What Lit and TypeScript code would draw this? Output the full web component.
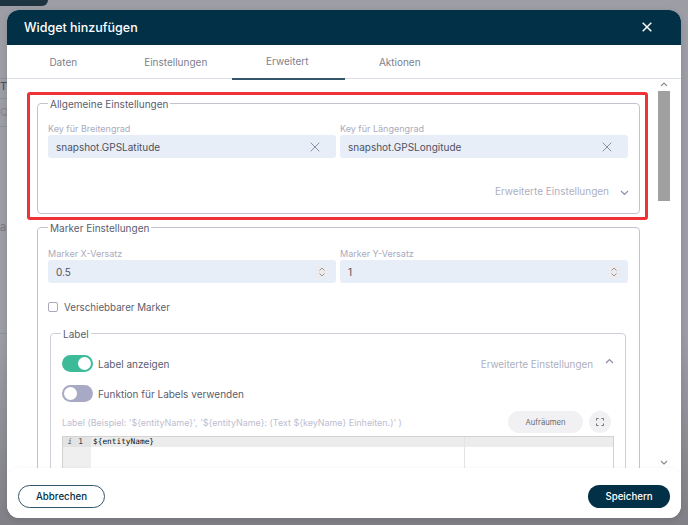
import { LitElement, html, css, svg } from "lit";
import { customElement } from "lit/decorators.js";

const x = svg`<svg width="10" height="10" viewBox="0 0 10 10"><path d="M.7.7l8.600 8.600M9.300.7L.7 9.300" stroke="#8b8fa3" stroke-width="1" fill="none"/></svg>`;
const spin = svg`<svg width="12" height="12" viewBox="0 0 12 12"><rect width="12" height="12" fill="#ececee"/><path d="M3.500 4.500L6 2l2.500 2.500M3.500 7.500L6 10l2.500-2.500" stroke="#8b8b95" stroke-width=".9" fill="none"/></svg>`;

@customElement("app-root")
export class AppRoot extends LitElement {
  static styles = css`
    :host { display: block; width: 688px; height: 525px; overflow: hidden; position: relative; background: #9c9da5; font-family: Inter, sans-serif; }
    .bg-tab { position: absolute; left: 0; top: 0; width: 48px; height: 6px; background: #1f3441; border-bottom-right-radius: 8px; }
    .bg-line { position: absolute; left: 0; width: 7px; height: 1px; background: #8f9199; }
    .bg-t { position: absolute; left: 0; color: #4a4c56; font-size: 11px; line-height: 14px; }
    .shade { position: absolute; left: 0; right: 0; bottom: 0; height: 190px; background: linear-gradient(#9c9da500, #808086); }
    .dialog { position: absolute; left: 7px; top: 10px; width: 674px; height: 508px; background: #fff; border-radius: 12px; display: flex; flex-direction: column; overflow: hidden; box-shadow: 0 2px 6px rgba(0,0,0,0.12); }
    .head { height: 35px; flex: none; background: #023047; color: #fff; display: flex; align-items: center; justify-content: space-between; padding: 0 29px 0 17px; font-size: 12.5px; font-weight: 500; }
    .head svg { display: block; margin-top: -1px; }
    .tabs { height: 34px; flex: none; display: flex; border-bottom: 1.5px solid #dcdce6; box-sizing: border-box; }
    .tab { width: 112.5px; display: flex; align-items: center; justify-content: center; font-size: 10px; color: #7d7f8c; box-sizing: border-box; margin-bottom: -1.5px; }
    .tab.on { border-bottom: 2px solid #33566a; padding-right: 2px; }
    .tab:last-child { padding-right: 2px; }
    .body { flex: 1; min-height: 0; overflow: hidden; display: flex; }
    .main { flex: 1; min-width: 0; padding: 24px 12px 0 30px; }
    .bar { width: 29px; flex: none; box-sizing: border-box; padding-right: 5px; display: flex; flex-direction: column; align-items: center; position: relative; }
    .thumb { width: 12px; height: 110px; background: #a0a0a0; margin-top: 4px; }
    .bar svg { display: block; }
    .up { margin-top: 3px; height: 5px; flex: none; }
    .down { position: absolute; bottom: 53px; left: 8px; }
    .group { position: relative; border: 1px solid #c3c3d0; border-radius: 4px; box-sizing: border-box; }
    .legend { position: absolute; top: -7px; left: 10px; background: #fff; padding: 0 2px; font-size: 10px; line-height: 14px; color: #5b5d6e; white-space: nowrap; }
    .g1 { height: 111px; padding: 19px 10px 0; margin-bottom: 13px; }
    .g2 { height: 300px; padding: 20px 10px 0; }
    .row { display: grid; grid-template-columns: 288px 288px; gap: 4px; }
    .lbl { font-size: 9px; line-height: 12px; color: #a9abbc; white-space: nowrap; }
    .inp { height: 23px; background: #e8eef8; border-radius: 3px; display: flex; align-items: center; justify-content: space-between; padding: 0 16px 0 8px; font-size: 10px; color: #4f5160; box-sizing: border-box; }
    .inp.num { padding-right: 8px; }
    .inp svg { display: block; }
    .adv { display: flex; justify-content: flex-end; align-items: center; gap: 11px; font-size: 10px; line-height: 14px; color: #adafc0; padding-top: 26px; }
    .adv svg { margin-top: 4px; }
    .check { display: flex; align-items: center; gap: 6px; font-size: 9.75px; color: #5b5d6e; margin-top: 19px; height: 10px; }
    .box { width: 8px; height: 8px; border: 1px solid #a9abbc; border-radius: 2px; background: #fff; }
    .g3 { position: relative; height: 210px; margin: 21px 2px 0; border: 1px solid #cfcfdc; border-radius: 4px; padding: 21px 11px 0; box-sizing: border-box; width: 576px; }
    .sw { display: flex; align-items: center; gap: 5px; font-size: 10px; color: #5b5d6e; height: 17px; white-space: nowrap; }
    .sw + .sw { margin-top: 13px; }
    .track { width: 31px; height: 17px; border-radius: 9px; position: relative; flex: none; background: #a8a9c4; }
    .track.on { background: #3dbb98; }
    .knob { position: absolute; left: 2px; top: 2px; width: 13px; height: 13px; border-radius: 50%; background: #fff; }
    .track.on .knob { left: 16px; }
    .sp { flex: 1; }
    .sw .adv2 { color: #adafc0; display: flex; align-items: center; gap: 12px; font-size: 9.85px; }
    .adv2 svg { margin-top: -6px; }
    .toolbar { display: flex; align-items: center; margin-top: 9px; height: 22px; font-size: 8.95px; color: #bdbdd0; white-space: nowrap; }
    .pill { width: 75px; height: 22px; border-radius: 11px; background: #f1f1f3; display: flex; align-items: center; justify-content: center; color: #6a6a72; font-size: 7.700px; margin-right: 6px; }
    .round { width: 22px; height: 22px; border-radius: 50%; background: #f1f1f3; display: flex; align-items: center; justify-content: center; margin-right: 3px; }
    .editor { margin-top: 3px; height: 40px; width: 552px; border: 1px solid #d2d2d2; border-bottom: 0; box-sizing: border-box; display: flex; font-family: "DejaVu Sans Mono", monospace; font-size: 7.8px; background: #fff; }
    .gutter { width: 28px; background: #efefef; color: #444; flex: none; }
    .gl { height: 10px; line-height: 10px; background: #e3e3e3; display: flex; justify-content: flex-end; gap: 6px; padding-right: 8px; }
    .gl i { color: #555; }
    .code { flex: 1; min-width: 0; position: relative; }
    .cl { height: 10px; line-height: 10px; background: #ececec; padding-left: 2px; color: #111; }
    .margin { position: absolute; left: 373px; top: 0; bottom: 0; width: 1px; background: #e4e4e4; }
    .foot { position: absolute; left: 0; right: 0; bottom: 0; height: 50px; background: #fff; border-radius: 12px; box-shadow: 0 -1px 3px rgba(0,0,0,0.03); display: flex; align-items: flex-end; justify-content: space-between; padding: 0 11px 10px; box-sizing: border-box; }
    .btn { height: 23px; border-radius: 12px; font-size: 9.7px; font-weight: 500; display: flex; align-items: center; justify-content: center; box-sizing: border-box; }
    .cancel { width: 87px; border: 1px solid #33566a; color: #023047; }
    .save { width: 82px; background: #023047; color: #fff; }
    .red { position: absolute; left: 27px; top: 92px; width: 621px; height: 128px; box-sizing: border-box; border: 3px solid #ee3238; border-radius: 3px; pointer-events: none; }
  `;

  render() {
    return html`
      <div class="shade"></div>
      <div class="bg-tab"></div>
      <div class="bg-line" style="top:78px"></div>
      <div class="bg-line" style="top:98px"></div>
      <div class="bg-line" style="top:126px"></div>
      <div class="bg-line" style="top:333px"></div>
      <div class="bg-t" style="top:79px">Ty</div>
      <div class="bg-t" style="top:105px;color:#85878f">Q</div>
      <div class="bg-t" style="top:220px;color:#75777f">a</div>
      <div class="dialog">
        <div class="head">
          <span>Widget hinzufügen</span>
          <svg width="10" height="10" viewBox="0 0 10 10"><path d="M.7.7l8.600 8.600M9.300.7L.7 9.300" stroke="#fff" stroke-width="1.500" fill="none"/></svg>
        </div>
        <div class="tabs">
          <div class="tab">Daten</div>
          <div class="tab">Einstellungen</div>
          <div class="tab on">Erweitert</div>
          <div class="tab">Aktionen</div>
        </div>
        <div class="body">
          <div class="main">
            <div class="group g1">
              <span class="legend">Allgemeine Einstellungen</span>
              <div class="row">
                <div><div class="lbl">Key für Breitengrad</div><div class="inp"><span>snapshot.GPSLatitude</span>${x}</div></div>
                <div><div class="lbl">Key für Längengrad</div><div class="inp"><span>snapshot.GPSLongitude</span>${x}</div></div>
              </div>
              <div class="adv"><span>Erweiterte Einstellungen</span><svg width="9" height="6" viewBox="0 0 9 6"><path d="M1 1l3.500 3.500L8 1" stroke="#8b8fa3" stroke-width="1.200" fill="none"/></svg></div>
            </div>
            <div class="group g2">
              <span class="legend">Marker Einstellungen</span>
              <div class="row">
                <div><div class="lbl">Marker X-Versatz</div><div class="inp num"><span>0.5</span>${spin}</div></div>
                <div><div class="lbl">Marker Y-Versatz</div><div class="inp num"><span>1</span>${spin}</div></div>
              </div>
              <div class="check"><span class="box"></span><span>Verschiebbarer Marker</span></div>
              <div class="g3">
                <span class="legend">Label</span>
                <div class="sw"><span class="track on"><span class="knob"></span></span><span>Label anzeigen</span><span class="sp"></span><span class="adv2">Erweiterte Einstellungen <svg width="9" height="6" viewBox="0 0 9 6"><path d="M1 5l3.500-3.500L8 5" stroke="#8b8fa3" stroke-width="1.200" fill="none"/></svg></span></div>
                <div class="sw"><span class="track"><span class="knob"></span></span><span>Funktion für Labels verwenden</span></div>
                <div class="toolbar"><span>Label (Beispiel: '\${entityName}', '\${entityName}: (Text \${keyName} Einheiten.)' )</span><span class="sp"></span><span class="pill">Aufräumen</span><span class="round"><svg width="8" height="8" viewBox="0 0 8 8"><path d="M.5 2.500V.5h2M5.500.5h2v2M7.500 5.500v2h-2M2.500 7.500h-2v-2" stroke="#70707a" stroke-width="1" fill="none"/></svg></span></div>
                <div class="editor">
                  <div class="gutter"><div class="gl"><i>i</i><span>1</span></div></div>
                  <div class="code"><div class="cl">\${entityName}</div><div class="margin"></div></div>
                </div>
              </div>
            </div>
          </div>
          <div class="bar">
            <svg class="up" width="8" height="5" viewBox="0 0 8 5"><path d="M1 4l3-3 3 3" stroke="#8b8b95" stroke-width="1.100" fill="none"/></svg>
            <div class="thumb"></div>
            <svg class="down" width="8" height="5" viewBox="0 0 8 5"><path d="M1 1l3 3 3-3" stroke="#8b8b95" stroke-width="1.100" fill="none"/></svg>
          </div>
        </div>
        <div class="foot">
          <div class="btn cancel">Abbrechen</div>
          <div class="btn save">Speichern</div>
        </div>
      </div>
      <div class="red"></div>
    `;
  }
}
